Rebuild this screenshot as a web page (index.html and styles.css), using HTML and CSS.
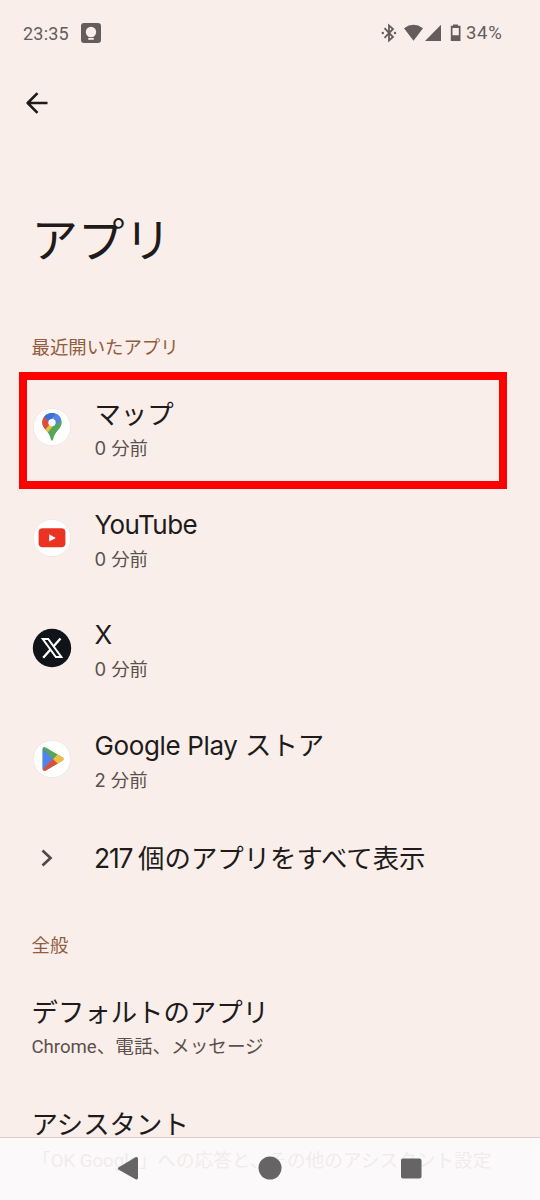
FILE: index.html
```html
<!DOCTYPE html>
<html lang="ja">
<head>
<meta charset="utf-8">
<meta name="viewport" content="width=device-width, initial-scale=1">
<title>アプリ</title>
<link rel="stylesheet" href="styles.css">
</head>
<body>
<div class="screen">
  <header class="status">
    <span class="clock">23:35</span>
    <svg class="status-note" width="20" height="20" viewBox="0 0 20 20"><rect width="20" height="20" rx="3" fill="#645d5c"/><circle cx="10" cy="9" r="5.2" fill="#f9eeea"/><path d="M7.500 12h5v1.700h-5zM7.200 15h5.600v1.800H7.200z" fill="#f9eeea"/></svg>
    <svg class="status-icons" width="82" height="20" viewBox="0 0 82 20">
      <path d="M3.500 5.200 12 14l-4 3.600V2.400L12 6l-8.500 8.800" fill="none" stroke="#645d5c" stroke-width="1.800"/>
      <circle cx="1.800" cy="10" r="1.200" fill="#645d5c"/><circle cx="14" cy="10" r="1.200" fill="#645d5c"/>
      <path d="M23 5.200Q32.500-1.700 42 5.200L32.500 17.700zM60 1.800V18H44z" fill="#645d5c"/>
      <path d="M72 1.500h5v1.300h2.500V18H69.800V2.800H72zM71.500 5v7.200h6.300V5z" fill="#645d5c" fill-rule="evenodd"/>
    </svg>
    <span class="percent">34%</span>
  </header>
  <nav class="toolbar">
    <svg width="22" height="22" viewBox="0 0 22 22" fill="none" stroke="#1d1a19" stroke-width="2.6"><path d="M21.500 11H2M11.500 1.200 1.700 11l9.800 9.800" stroke-linejoin="round"/></svg>
  </nav>
  <h1 class="title">アプリ</h1>
  <h2 class="section">最近開いたアプリ</h2>
  <main>
    <div class="row row-selected">
      <svg class="app-icon" viewBox="0 0 40 40">
        <circle class="disc" cx="20" cy="20" r="18.700"/>
        <clipPath id="pin"><path d="M20 6C14.500 6 10.300 10.200 10.300 15.600C10.300 22.300 17.400 24 18.800 32.300Q20 35 21.200 32.300C22.700 24 29.700 22.300 29.700 15.600C29.700 10.200 25.500 6 20 6z"/></clipPath>
        <g clip-path="url(#pin)"><path d="M9 5h22v31H9z" fill="#55a55a"/><path d="M8 24 22 8v10L12 30z" fill="#f0bd42"/><path d="M8 8h5l7 7-9 10-4-3z" fill="#d95040"/><path d="m20 15 4-10h8v5l-8 8z" fill="#5083ed"/><path d="M12 9.500 16 3h8l-1.500 6L17 15z" fill="#3870dc"/></g>
        <circle cx="20" cy="15.600" r="3.700" fill="#fff"/>
      </svg>
      <div class="copy"><div class="name">マップ</div><div class="sub">0 分前</div></div>
    </div>
    <div class="row">
      <svg class="app-icon" viewBox="0 0 40 40"><circle class="disc" cx="20" cy="20" r="18.700"/><rect x="6.600" y="10.200" width="26.800" height="19" rx="4" fill="#ea3323"/><path d="m17.200 16.200 6.600 3.700-6.600 3.700z" fill="#fff"/></svg>
      <div class="copy"><div class="name latin">YouTube</div><div class="sub">0 分前</div></div>
    </div>
    <div class="row">
      <svg class="app-icon" viewBox="0 0 40 40"><circle cx="20" cy="20" r="19.200" fill="#101418"/><path d="M10.800 11h5.400L29.300 29h-5.400z" fill="none" stroke="#fff" stroke-width="2"/><path d="m28.500 10.500-7.300 8.300M18.500 21.500l-7.300 8.200" stroke="#fff" stroke-width="2.300"/></svg>
      <div class="copy"><div class="name latin">X</div><div class="sub">0 分前</div></div>
    </div>
    <div class="row">
      <svg class="app-icon" viewBox="0 0 40 40"><circle class="disc" cx="20" cy="20" r="18.700"/>
        <clipPath id="play"><path d="M10.600 10.500Q10.600 7 13.800 8.500L30.400 18.200Q32.700 20 30.400 21.800L13.800 31.500Q10.600 32.700 10.600 29.500z"/></clipPath>
        <g clip-path="url(#play)"><path d="M10 7h24v26H10z" fill="#55a55a"/><path d="m10 9 11 11-11 11z" fill="#5083ed"/><path d="m10 31 11-11 6 4-13 10h-4z" fill="#d95040"/><path d="m21 20 5-5 8 5-8 5z" fill="#f0bd42"/></g></svg>
      <div class="copy"><div class="name"><span class="store">Google Play</span> <span class="ja">ストア</span></div><div class="sub">2 分前</div></div>
    </div>
    <div class="row row-all">
      <svg class="chevron" width="12" height="18" viewBox="0 0 12 18"><path d="m1.500 1.500 8 7.500-8 7.500" fill="none" stroke="#534846" stroke-width="2.700"/></svg>
      <div class="name"><span class="count">217</span> 個のアプリをすべて表示</div>
    </div>
  </main>
  <h2 class="section general">全般</h2>
  <div class="pref"><div class="name">デフォルトのアプリ</div><div class="sub roboto">Chrome、電話、メッセージ</div></div>
  <div class="pref pref-assistant"><div class="name">アシスタント</div></div>
  <footer class="navbar">
    <p class="ghost">「OK Google」への応答と、その他のアシスタント設定</p>
    <svg class="navkeys" width="540" height="62" viewBox="0 0 540 62" fill="#656565"><path d="M118.800 29.300 135.500 19.300Q138 18.300 138 21v18.600Q138 42.500 135.500 41.200L118.800 31.700Q116.800 30.500 118.800 29.300z"/><circle cx="270" cy="30" r="11.500"/><rect x="401" y="20.500" width="20.500" height="20" rx="2"/></svg>
  </footer>
</div>
</body>
</html>
```
FILE: styles.css
```css
*, *::after { box-sizing: border-box; }
body { margin: 0; background: #f9eeea; font-family: Inter, "Noto Sans CJK JP", sans-serif; color: #201b1a; }
.screen { width: 540px; height: 1200px; overflow: hidden; display: flex; flex-direction: column; }
h1, h2, p { margin: 0; font-weight: 400; }
svg { display: block; flex: none; }
.status { height: 66px; flex: none; display: flex; align-items: center; padding: 0 35px 0 23px; color: #645d5c; font: 400 18px Roboto, sans-serif; }
.clock { width: 58px; letter-spacing: .2px; }
.status-icons { margin-left: auto; }
.percent { width: 39px; margin-left: 3px; font-size: 18.500px; letter-spacing: .7px; }
.toolbar { height: 74px; flex: none; padding: 26px 26px 0; }
.title { height: 190px; flex: none; padding: 70px 0 0 31.500px; font-size: 46.500px; line-height: 60px; }
.section { height: 42px; flex: none; padding-left: 31.500px; font-size: 18.400px; line-height: 34px; color: #925c3e; }
.row { position: relative; height: 110.500px; display: flex; align-items: center; padding-left: 32.400px; }
.row-selected::after { content: ""; position: absolute; left: 19px; top: -.5px; width: 488px; height: 117.500px; border: 8.500px solid #f00; z-index: 1; }
.app-icon { width: 40px; height: 40px; margin-right: 22px; }
.disc { fill: #fff; stroke: #eee4e1; stroke-width: .8; }
.copy { padding-top: 7px; }
.name { font-size: 26.400px; line-height: 36px; white-space: nowrap; }
.latin { font-size: 26px; letter-spacing: -.55px; }
.store { font-size: 26px; letter-spacing: -.35px; }
.count { letter-spacing: -1.200px; }
.row-all .name { word-spacing: -1.500px; }
.sub { font-size: 18.400px; line-height: 33px; color: #5b504d; white-space: nowrap; }
.row-all { height: 88px; padding-left: 41px; }
.chevron { margin-right: 41px; }
.general { height: 64px; padding-top: 26px; }
.pref { flex: none; height: 112px; padding: 28px 0 0 31.500px; }
.pref-assistant { height: 59px; }
.roboto { font-family: Roboto, "Noto Sans CJK JP", sans-serif; font-size: 18.600px; line-height: 35px; }
.navbar { position: relative; height: 63px; margin-top: auto; flex: none; background: #fcf9fa; border-top: 1px solid #d9cdca; z-index: 1; }
.ghost { padding: 7px 0 0 32px; font: 18.650px/32px Roboto, "Noto Sans CJK JP", sans-serif; color: #f0ecec; white-space: nowrap; }
.navkeys { position: absolute; left: 0; top: 0; }
```
